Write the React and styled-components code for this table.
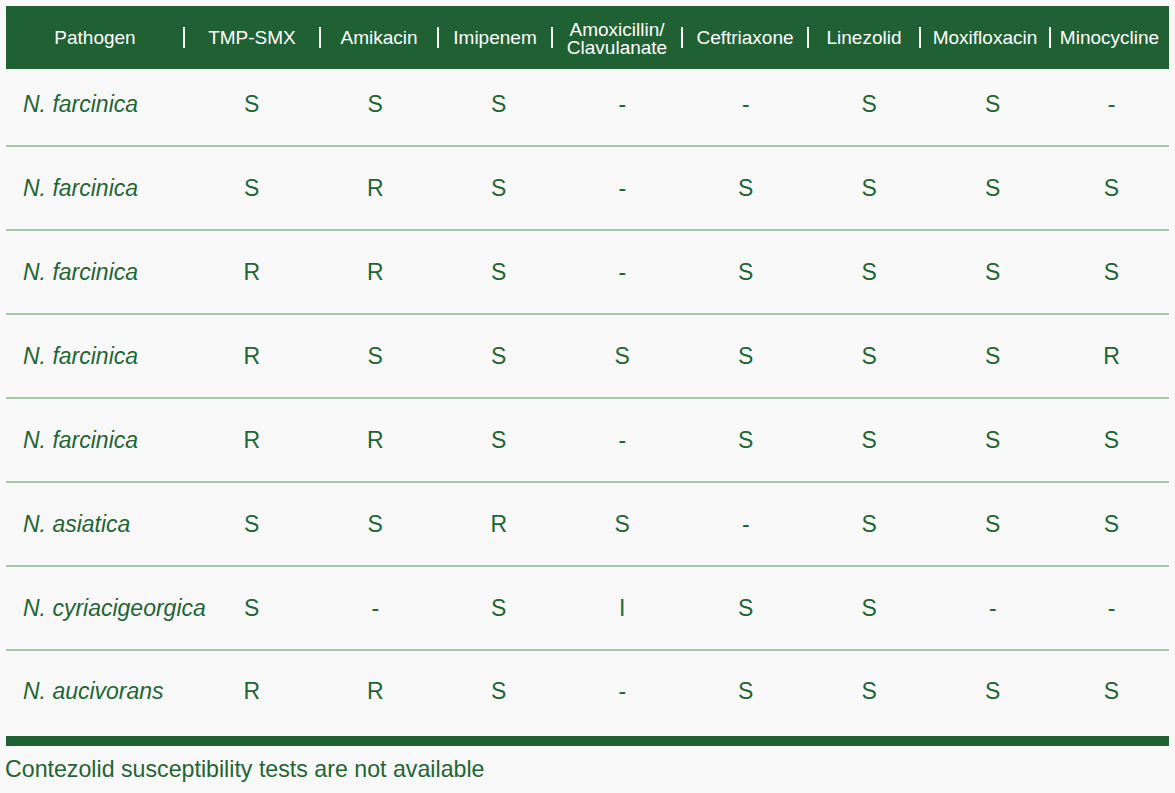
import React from 'react';
import styled, { createGlobalStyle } from 'styled-components';

const GlobalStyle = createGlobalStyle`
    html, body {
        margin: 0;
        padding: 0;
        background-color: #f8f8f8;
    }
    body {
        font-family: "Liberation Sans", Arial, sans-serif;
    }
`;

const Page = styled.div`
    padding: 6px 6px 0 6px;
    width: 1163px;
`;

const HeaderRow = styled.div`
    display: grid;
    grid-template-columns: 178px 136px 118px 114px 130px 126px 112px 130px 119px;
    height: 63px;
    background-color: #1f6133;
`;

const HeaderCell = styled.div`
    position: relative;
    display: flex;
    align-items: center;
    justify-content: center;
    text-align: center;
    color: #ffffff;
    font-size: 19px;
    white-space: nowrap;

    &::before {
        content: '';
        display: ${props => (props.$divider ? 'block' : 'none')};
        position: absolute;
        left: -1px;
        top: 21px;
        width: 2px;
        height: 21px;
        background-color: #ffffff;
    }
`;

const HeaderStack = styled.div`
    display: flex;
    flex-direction: column;
    align-items: center;
    padding-top: 2px;
`;

const HeaderLine = styled.span`
    display: block;
    line-height: 18px;
    height: 18px;
`;

const BodyRow = styled.div`
    display: grid;
    grid-template-columns: 184px repeat(7, 123.5px) 114px;
    align-items: center;
    height: ${props => props.$height}px;
    padding-bottom: ${props => props.$pad || 0}px;
    border-bottom: ${props => (props.$last ? 'none' : '2px solid #a3c6a6')};
    box-sizing: content-box;
`;

const NameCell = styled.div`
    padding-left: 17px;
    font-size: 23px;
    font-style: italic;
    color: #1f6534;
    white-space: nowrap;
`;

const ValueCell = styled.div`
    text-align: center;
    font-size: 23px;
    color: #1f6534;
`;

const BottomBar = styled.div`
    height: 10px;
    background-color: #1f6133;
`;

const Note = styled.p`
    margin: 10px 0 0 -1px;
    font-size: 23.2px;
    line-height: 26px;
    color: #1f6534;
`;

const columns = [
    'Pathogen',
    'TMP-SMX',
    'Amikacin',
    'Imipenem',
    ['Amoxicillin/', 'Clavulanate'],
    'Ceftriaxone',
    'Linezolid',
    'Moxifloxacin',
    'Minocycline',
];

const rows = [
    ['N. farcinica', 'S', 'S', 'S', '-', '-', 'S', 'S', '-'],
    ['N. farcinica', 'S', 'R', 'S', '-', 'S', 'S', 'S', 'S'],
    ['N. farcinica', 'R', 'R', 'S', '-', 'S', 'S', 'S', 'S'],
    ['N. farcinica', 'R', 'S', 'S', 'S', 'S', 'S', 'S', 'R'],
    ['N. farcinica', 'R', 'R', 'S', '-', 'S', 'S', 'S', 'S'],
    ['N. asiatica', 'S', 'S', 'R', 'S', '-', 'S', 'S', 'S'],
    ['N. cyriacigeorgica', 'S', '-', 'S', 'I', 'S', 'S', '-', '-'],
    ['N. aucivorans', 'R', 'R', 'S', '-', 'S', 'S', 'S', 'S'],
];

const App = () => {
    return (
        <>
            <GlobalStyle />
            <Page>
                <HeaderRow>
                    {columns.map((col, i) => (
                        <HeaderCell key={i} $divider={i > 0}>
                            {Array.isArray(col) ? (
                                <HeaderStack>
                                    <HeaderLine>{col[0]}</HeaderLine>
                                    <HeaderLine>{col[1]}</HeaderLine>
                                </HeaderStack>
                            ) : col}
                        </HeaderCell>
                    ))}
                </HeaderRow>

                {rows.map((row, r) => {
                    const first = r === 0;
                    const last = r === rows.length - 1;
                    return (
                        <BodyRow
                            key={r}
                            $height={first ? 70 : last ? 80 : 82}
                            $pad={first ? 6 : last ? 5 : 0}
                            $last={last}
                        >
                            <NameCell>{row[0]}</NameCell>
                            {row.slice(1).map((v, c) => (
                                <ValueCell key={c}>{v}</ValueCell>
                            ))}
                        </BodyRow>
                    );
                })}

                <BottomBar />
                <Note>Contezolid susceptibility tests are not available</Note>
            </Page>
        </>
    );
};

export default App;
